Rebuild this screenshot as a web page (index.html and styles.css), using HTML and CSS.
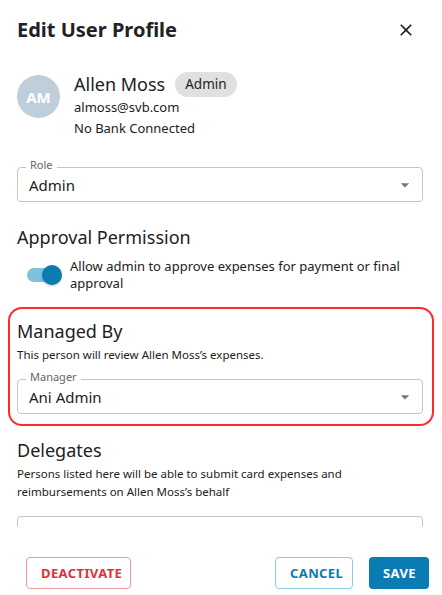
FILE: index.html
```html
<!DOCTYPE html>
<html lang="en">
<head>
<meta charset="utf-8">
<title>Edit User Profile</title>
<link rel="stylesheet" href="styles.css">
</head>
<body>
<div class="dialog">
  <header class="dialog-header">
    <h1 class="dialog-title">Edit User Profile</h1>
    <button class="close-btn" aria-label="Close">
      <svg viewBox="0 0 24 24" width="20" height="20"><path d="M19 6.41 17.59 5 12 10.59 6.41 5 5 6.41 10.59 12 5 17.59 6.41 19 12 13.41 17.59 19 19 17.59 13.41 12z" fill="currentColor"/></svg>
    </button>
  </header>

  <div class="dialog-content">
    <div class="profile">
      <div class="avatar">AM</div>
      <div class="profile-info">
        <div class="name-row">
          <span class="name">Allen Moss</span>
          <span class="chip">Admin</span>
        </div>
        <div class="meta">almoss@svb.com</div>
        <div class="meta">No Bank Connected</div>
      </div>
    </div>

    <div class="field field-role">
      <span class="field-label">Role</span>
      <span class="field-value">Admin</span>
      <svg class="field-arrow" viewBox="0 0 24 24" width="20" height="20"><path d="M7 10l5 5 5-5z" fill="currentColor"/></svg>
    </div>

    <h2 class="section-title approval-title">Approval Permission</h2>
    <div class="switch-row">
      <span class="switch"><span class="switch-track"></span><span class="switch-thumb"></span></span>
      <span class="switch-label">Allow admin to approve expenses for payment or final approval</span>
    </div>

    <section class="managed">
      <h2 class="section-title">Managed By</h2>
      <p class="section-desc">This person will review Allen Moss’s expenses.</p>
      <div class="field field-manager">
        <span class="field-label">Manager</span>
        <span class="field-value">Ani Admin</span>
        <svg class="field-arrow" viewBox="0 0 24 24" width="20" height="20"><path d="M7 10l5 5 5-5z" fill="currentColor"/></svg>
      </div>
    </section>

    <h2 class="section-title delegates-title">Delegates</h2>
    <p class="section-desc">Persons listed here will be able to submit card expenses and reimbursements on Allen Moss’s behalf</p>
    <div class="delegates-box"></div>
  </div>

  <footer class="dialog-footer">
    <button class="btn btn-danger">DEACTIVATE</button>
    <div class="footer-right">
      <button class="btn btn-outline">CANCEL</button>
      <button class="btn btn-primary">SAVE</button>
    </div>
  </footer>
</div>
</body>
</html>
```

FILE: styles.css
```css
* { box-sizing: border-box; }
html, body {
  margin: 0;
  padding: 0;
  background: #ffffff;
}
body {
  font-family: "Noto Sans", "Open Sans", sans-serif;
  color: #212121;
}
.dialog {
  width: 442px;
  height: 595px;
  display: flex;
  flex-direction: column;
  overflow: hidden;
}
.dialog-header {
  display: flex;
  align-items: center;
  justify-content: space-between;
  padding: 16px 26px 0 17px;
}
.dialog-title {
  margin: 0;
  font-size: 20px;
  line-height: 28px;
  font-weight: 700;
  color: #1e2227;
}
.close-btn {
  border: 0;
  background: none;
  padding: 0;
  width: 20px;
  height: 20px;
  color: #212121;
  display: flex;
}
.dialog-content {
  flex: 1;
  overflow: hidden;
  padding: 0 19px 0 17px;
}
.profile {
  display: flex;
  gap: 14px;
  margin-top: 28px;
}
.avatar {
  width: 43px;
  height: 43px;
  border-radius: 50%;
  background: #bfcedb;
  color: #ffffff;
  font-weight: 700;
  font-size: 15px;
  display: flex;
  align-items: center;
  justify-content: center;
  margin-top: 3px;
  flex: none;
}
.profile-info {
  display: flex;
  flex-direction: column;
}
.name-row {
  display: flex;
  align-items: center;
  gap: 10px;
  height: 25px;
}
.name {
  font-size: 18px;
  line-height: 25px;
}
.chip {
  height: 25px;
  line-height: 25px;
  padding: 0 10px;
  border-radius: 13px;
  background: #e0e0e0;
  font-size: 13.5px;
}
.meta {
  font-size: 13px;
  line-height: 21px;
}
.field {
  position: relative;
  height: 35px;
  border: 1px solid #c4c4c4;
  border-radius: 4px;
  display: flex;
  align-items: center;
  padding: 0 7px 0 11px;
}
.field-role { margin-top: 28px; }
.field-manager { margin-top: 16px; }
.field-label {
  position: absolute;
  left: 8px;
  top: -9px;
  padding: 0 4px;
  background: #ffffff;
  font-size: 11px;
  line-height: 12px;
  color: #666666;
}
.field-value {
  flex: 1;
  font-size: 15px;
}
.field-arrow {
  color: #757575;
  flex: none;
}
.section-title {
  margin: 0;
  font-size: 18px;
  line-height: 24px;
  font-weight: 400;
}
.approval-title { margin-top: 23px; }
.switch-row {
  display: flex;
  align-items: center;
  gap: 9px;
  margin-top: 9px;
  padding-left: 10px;
}
.switch {
  position: relative;
  width: 34px;
  height: 20px;
  flex: none;
  display: flex;
  align-items: center;
}
.switch-track {
  width: 34px;
  height: 14px;
  border-radius: 7px;
  background: #80c0dc;
}
.switch-thumb {
  position: absolute;
  right: -1px;
  top: 0;
  width: 20px;
  height: 20px;
  border-radius: 50%;
  background: #0b7bb3;
  box-shadow: 0 1px 2px rgba(0,0,0,0.25);
}
.switch-label {
  font-size: 13px;
  line-height: 17px;
}
.managed {
  margin: 15px -11px 0 -9px;
  padding: 10px 9px 10px 7px;
  border: 2px solid #ff2a2a;
  border-radius: 14px;
}
.section-desc {
  margin: 3px 0 0;
  font-size: 11.5px;
  line-height: 18px;
}
.field-manager { margin-top: 15px; }
.delegates-title { margin-top: 12px; }
.delegates-box {
  margin-top: 15px;
  height: 56px;
  border: 1px solid #c4c4c4;
  border-radius: 4px;
}
.dialog-footer {
  height: 69px;
  flex: none;
  display: flex;
  justify-content: space-between;
  align-items: flex-start;
  padding: 31px 13px 0 26px;
}
.footer-right {
  display: flex;
  gap: 16px;
}
.btn {
  font-family: "Noto Sans", "Open Sans", sans-serif;
  height: 32px;
  border-radius: 4px;
  font-size: 13px;
  font-weight: 700;
  letter-spacing: 0.4px;
  padding: 0 14px;
  background: #ffffff;
  cursor: pointer;
}
.btn-danger {
  width: 105px;
  border: 1px solid #f0979c;
  color: #e0303a;
}
.btn-outline {
  width: 78px;
  border: 1px solid #8ccbe1;
  color: #0b7bb3;
}
.btn-primary {
  width: 60px;
  border: 0;
  background: #0b7bb3;
  color: #ffffff;
}
```
